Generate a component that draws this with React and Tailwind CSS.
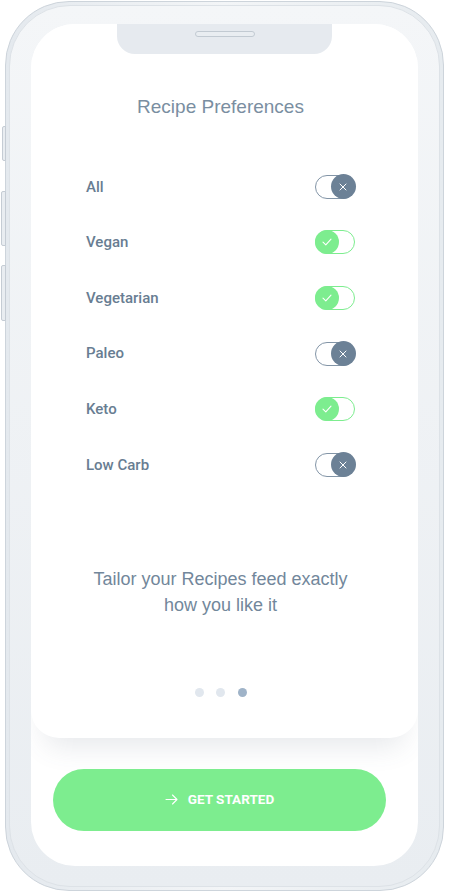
import React from "react";

const prefs = [
  { label: "All", on: false },
  { label: "Vegan", on: true },
  { label: "Vegetarian", on: true },
  { label: "Paleo", on: false },
  { label: "Keto", on: true },
  { label: "Low Carb", on: false },
];

function Toggle({ on }) {
  if (on) {
    return (
      <div className="w-[40px] h-[24px] rounded-full border-[1.5px] border-[#7ded8f] bg-white flex items-center justify-start">
        <div className="w-[24px] h-[24px] -ml-[1.5px] rounded-full bg-[#7ded8f] flex items-center justify-center">
          <svg width="10" height="8" viewBox="0 0 10 8" fill="none">
            <path d="M1 4.2 L3.8 6.8 L9 1.2" stroke="#ffffff" strokeWidth="1.1" strokeLinecap="round" strokeLinejoin="round" />
          </svg>
        </div>
      </div>
    );
  }
  return (
    <div className="w-[40px] h-[24px] rounded-full border-[1.5px] border-[#8395a7] bg-white flex items-center justify-end">
      <div className="w-[25px] h-[25px] -mr-[1.5px] rounded-full bg-[#6c8196] flex items-center justify-center">
        <svg width="8" height="8" viewBox="0 0 8 8" fill="none">
          <path d="M1 1 L7 7 M7 1 L1 7" stroke="#ffffff" strokeWidth="1" strokeLinecap="round" />
        </svg>
      </div>
    </div>
  );
}

const arial = { fontFamily: "'Liberation Sans', Arial, sans-serif" };

export default function App() {
  return (
    <div
      className="w-[449px] h-[893px] bg-white relative overflow-hidden"
      style={{ fontFamily: "Roboto, 'Liberation Sans', Arial, sans-serif" }}
    >
      {/* side buttons */}
      <div className="absolute left-[2px] top-[126px] w-[4px] h-[35px] rounded-l-[2px] bg-[#e9edf1] border border-[#c5ccd4]" />
      <div className="absolute left-[1px] top-[191px] w-[5px] h-[55px] rounded-l-[2px] bg-[#e9edf1] border border-[#c5ccd4]" />
      <div className="absolute left-[1px] top-[265px] w-[5px] h-[56px] rounded-l-[2px] bg-[#e9edf1] border border-[#c5ccd4]" />
      {/* frame */}
      <div className="ml-[5px] mt-[1px] w-[439px] h-[890px] rounded-[64px] border border-[#cdd4db] bg-gradient-to-r from-[#e4e9ee] via-[#f3f5f7] to-[#e6ebef] p-[3px]">
        <div className="w-full h-full rounded-[61px] border border-[#dde2e7] bg-gradient-to-b from-[#f4f6f8] to-[#e9edf1] pt-[18px] pl-[21px] pr-[21px] pb-[20px]">
          <div className="w-full h-full rounded-[44px] bg-white overflow-hidden flex flex-col">
            {/* card */}
            <div className="rounded-b-[28px] bg-white shadow-[0_22px_28px_-14px_rgba(80,90,110,0.14)] flex flex-col items-center">
              {/* notch */}
              <div className="w-[215px] h-[30px] bg-[#e6eaef] rounded-b-[18px] flex items-start justify-center pt-[7px]">
                <div className="w-[60px] h-[6px] rounded-full bg-[#e9edf1] border border-[#c2cad2]" />
              </div>
              <div className="mt-[41px] mr-[8px] h-[24px] leading-[24px] text-[19px] text-[#7a8ea1]" style={arial}>
                Recipe Preferences
              </div>
              <div className="mt-[40px] w-full flex flex-col">
                {prefs.map((p) => (
                  <div key={p.label} className="h-[55.6px] flex items-center justify-between pl-[55px] pr-[63px]">
                    <span className="text-[15px] font-medium text-[#687d92]">{p.label}</span>
                    <Toggle on={p.on} />
                  </div>
                ))}
              </div>
              <div className="mt-[73px] mr-[8px] text-center text-[18px] leading-[26px] text-[#72879b]" style={arial}>
                Tailor your Recipes feed exactly
                <br />
                how you like it
              </div>
              <div className="mt-[70px] mb-[41px] mr-[8px] flex items-center gap-[12.5px]">
                <div className="w-[9px] h-[9px] rounded-full bg-[#e1e7ee]" />
                <div className="w-[9px] h-[9px] rounded-full bg-[#e1e7ee]" />
                <div className="w-[9px] h-[9px] rounded-full bg-[#9fb3c8]" />
              </div>
            </div>
            {/* button */}
            <div className="mt-[31px] pl-[22px] pr-[32px]">
              <div className="h-[62px] rounded-full bg-[#7ded8f] flex items-center justify-center gap-[10px]">
                <svg width="13" height="11" viewBox="0 0 13 11" fill="none">
                  <path d="M1 5.5 H12 M7.5 1 L12 5.5 L7.5 10" stroke="#ffffff" strokeWidth="1.1" strokeLinecap="round" strokeLinejoin="round" />
                </svg>
                <span className="text-[13.5px] font-bold text-white">GET STARTED</span>
              </div>
            </div>
          </div>
        </div>
      </div>
    </div>
  );
}
